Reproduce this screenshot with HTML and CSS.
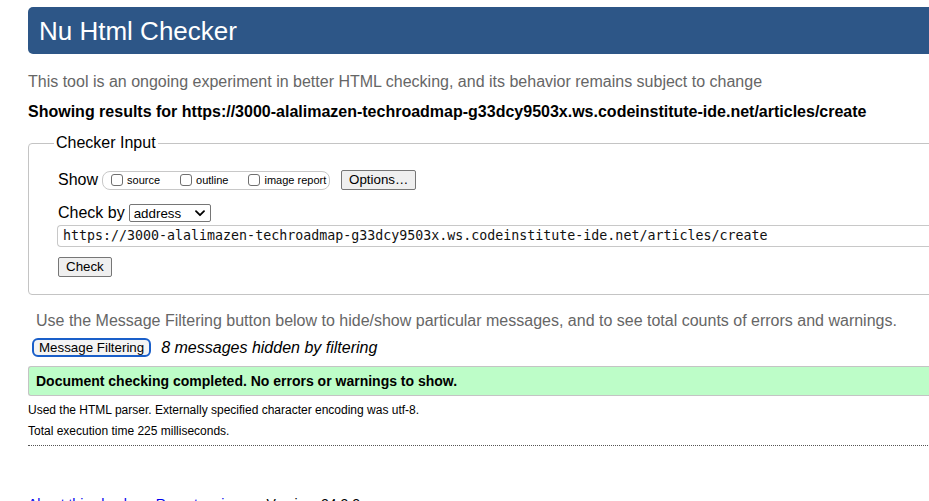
FILE: index.html
```html
<!DOCTYPE html>
<html lang="en">
<head>
<meta charset="utf-8">
<title>Showing results for https://3000-alalimazen-techroadmap-g33dcy9503x.ws.codeinstitute-ide.net/articles/create - Nu Html Checker</title>
<link rel="stylesheet" href="styles.css">
</head>
<body>
<div class="page">
  <h1 class="banner">Nu Html Checker</h1>
  <p class="intro">This tool is an ongoing experiment in better HTML checking, and its behavior remains subject to change</p>
  <p class="results-for">Showing results for https://3000-alalimazen-techroadmap-g33dcy9503x.ws.codeinstitute-ide.net/articles/create</p>
  <fieldset class="checker">
    <legend class="legend">Checker Input</legend>
    <div class="row show-row">
      <span class="lbl">Show</span>
      <span class="show-group">
        <label class="opt"><span class="cb"></span>source</label>
        <label class="opt"><span class="cb"></span>outline</label>
        <label class="opt"><span class="cb"></span>image report</label>
      </span>
      <button class="btn">Options…</button>
    </div>
    <div class="row checkby-row">
      <span class="lbl">Check by</span>
      <span class="select">address
        <svg class="chev" width="10" height="7" viewBox="0 0 10 7"><path d="M1 1.2 L5 5.2 L9 1.2" fill="none" stroke="#000" stroke-width="1.8" stroke-linecap="round" stroke-linejoin="round"/></svg>
      </span>
    </div>
    <div class="url">https://3000-alalimazen-techroadmap-g33dcy9503x.ws.codeinstitute-ide.net/articles/create</div>
    <div class="row check-row"><button class="btn">Check</button></div>
  </fieldset>
  <p class="filter-note">Use the Message Filtering button below to hide/show particular messages, and to see total counts of errors and warnings.</p>
  <div class="filter-row">
    <button class="btn btn-focus">Message Filtering</button>
    <em class="hidden-count">8 messages hidden by filtering</em>
  </div>
  <div class="success">Document checking completed. No errors or warnings to show.</div>
  <p class="small">Used the HTML parser. Externally specified character encoding was utf-8.</p>
  <p class="small">Total execution time 225 milliseconds.</p>
  <hr class="dotted">
  <p class="footer"><a href="#">About this checker</a> • <a href="#">Report an issue</a> • Version: 24.3.2</p>
</div>
</body>
</html>
```
FILE: styles.css
```css
html { overflow: hidden; }
body {
  margin: 0;
  font-family: "Liberation Sans", Arial, sans-serif;
  color: #000;
  background: #fff;
}
.page {
  width: 1000px;
  padding: 7px 0 0 28px;
}
.banner {
  margin: 0;
  height: 47px;
  box-sizing: border-box;
  padding: 9px 11px 0;
  background: #2d5687;
  color: #fff;
  font-size: 26px;
  font-weight: normal;
  line-height: 30px;
  border-radius: 5px;
}
.intro {
  margin: 19px 0 0;
  color: #666;
  font-size: 16px;
  line-height: 18px;
}
.results-for {
  margin: 12px 0 0;
  font-weight: bold;
  font-size: 16px;
  line-height: 18px;
}
.checker {
  margin: 13px 0 0;
  padding: 18px 0 17px 29px;
  border: 1px solid #c4c4c4;
  border-radius: 4px;
  min-width: 0;
}
.legend {
  margin-left: -4px;
  padding: 0 2px;
  font-size: 16px;
  line-height: 18px;
}
.row {
  display: flex;
  align-items: center;
}
.lbl {
  font-size: 16px;
  line-height: 18px;
}
.show-row { height: 20px; }
.show-group {
  display: flex;
  align-items: center;
  margin-left: 4px;
  width: 228px;
  height: 19px;
  padding: 0 0 0 8px;
  border: 1px solid #c8c8c8;
  border-radius: 8px;
  box-sizing: border-box;
}
.opt {
  display: flex;
  align-items: center;
  font-size: 11px;
  margin-right: 20px;
}
.opt:last-child { margin-right: 0; }
.cb {
  width: 12px;
  height: 12px;
  border: 1px solid #6f6f6f;
  border-radius: 3px;
  margin-right: 4px;
  box-sizing: border-box;
}
.btn {
  font-family: "Liberation Sans", Arial, sans-serif;
  font-size: 13.33px;
  height: 20px;
  padding: 0 7px;
  background: #efefef;
  border: 1px solid #767676;
  border-radius: 2px;
  color: #000;
  line-height: 18px;
}
.show-row .btn { margin-left: 11px; }
.checkby-row { margin-top: 14px; }
.select {
  display: inline-flex;
  align-items: center;
  justify-content: space-between;
  margin-left: 4px;
  width: 82px;
  height: 18px;
  box-sizing: border-box;
  border: 1px solid #767676;
  border-radius: 2px;
  padding: 0 5px 0 4px;
  font-size: 13.33px;
}
.url {
  margin: 3px 0 0 -1px;
  height: 22px;
  box-sizing: border-box;
  border: 1px solid #c8c8c8;
  border-right: none;
  border-radius: 4px 0 0 4px;
  padding: 0 0 0 5px;
  font-family: "DejaVu Sans Mono", monospace;
  font-size: 13.3px;
  line-height: 20px;
  color: #111;
}
.check-row { margin-top: 10px; }
.filter-note {
  margin: 17px 0 0 8px;
  color: #666;
  font-size: 16px;
  line-height: 18px;
}
.filter-row {
  display: flex;
  align-items: center;
  margin: 8px 0 0 4px;
}
.btn-focus {
  height: 19px;
  padding: 0 5px;
  border: 2px solid #1a5fc9;
  border-radius: 6px;
  background: #f4f4f4;
  line-height: 15px;
}
.hidden-count {
  margin-left: 10px;
  font-size: 16px;
  line-height: 18px;
}
.success {
  margin-top: 9px;
  height: 30px;
  box-sizing: border-box;
  padding: 6px 7px 0;
  background: #bdfdc8;
  border: 1px solid #c4c4c4;
  border-right: none;
  border-radius: 3px 0 0 3px;
  font-weight: bold;
  font-size: 14px;
  line-height: 16px;
}
.small {
  margin: 7px 0 0;
  font-size: 12px;
  line-height: 14px;
}
.small + .small { margin-top: 7px; }
.dotted {
  margin: 7px 0 0;
  border: none;
  border-top: 1px dotted #555;
  height: 0;
}
.footer {
  margin: 50px 0 0;
  font-size: 14px;
  line-height: 16px;
}
.footer a { color: #00e; text-decoration: none; }
```
